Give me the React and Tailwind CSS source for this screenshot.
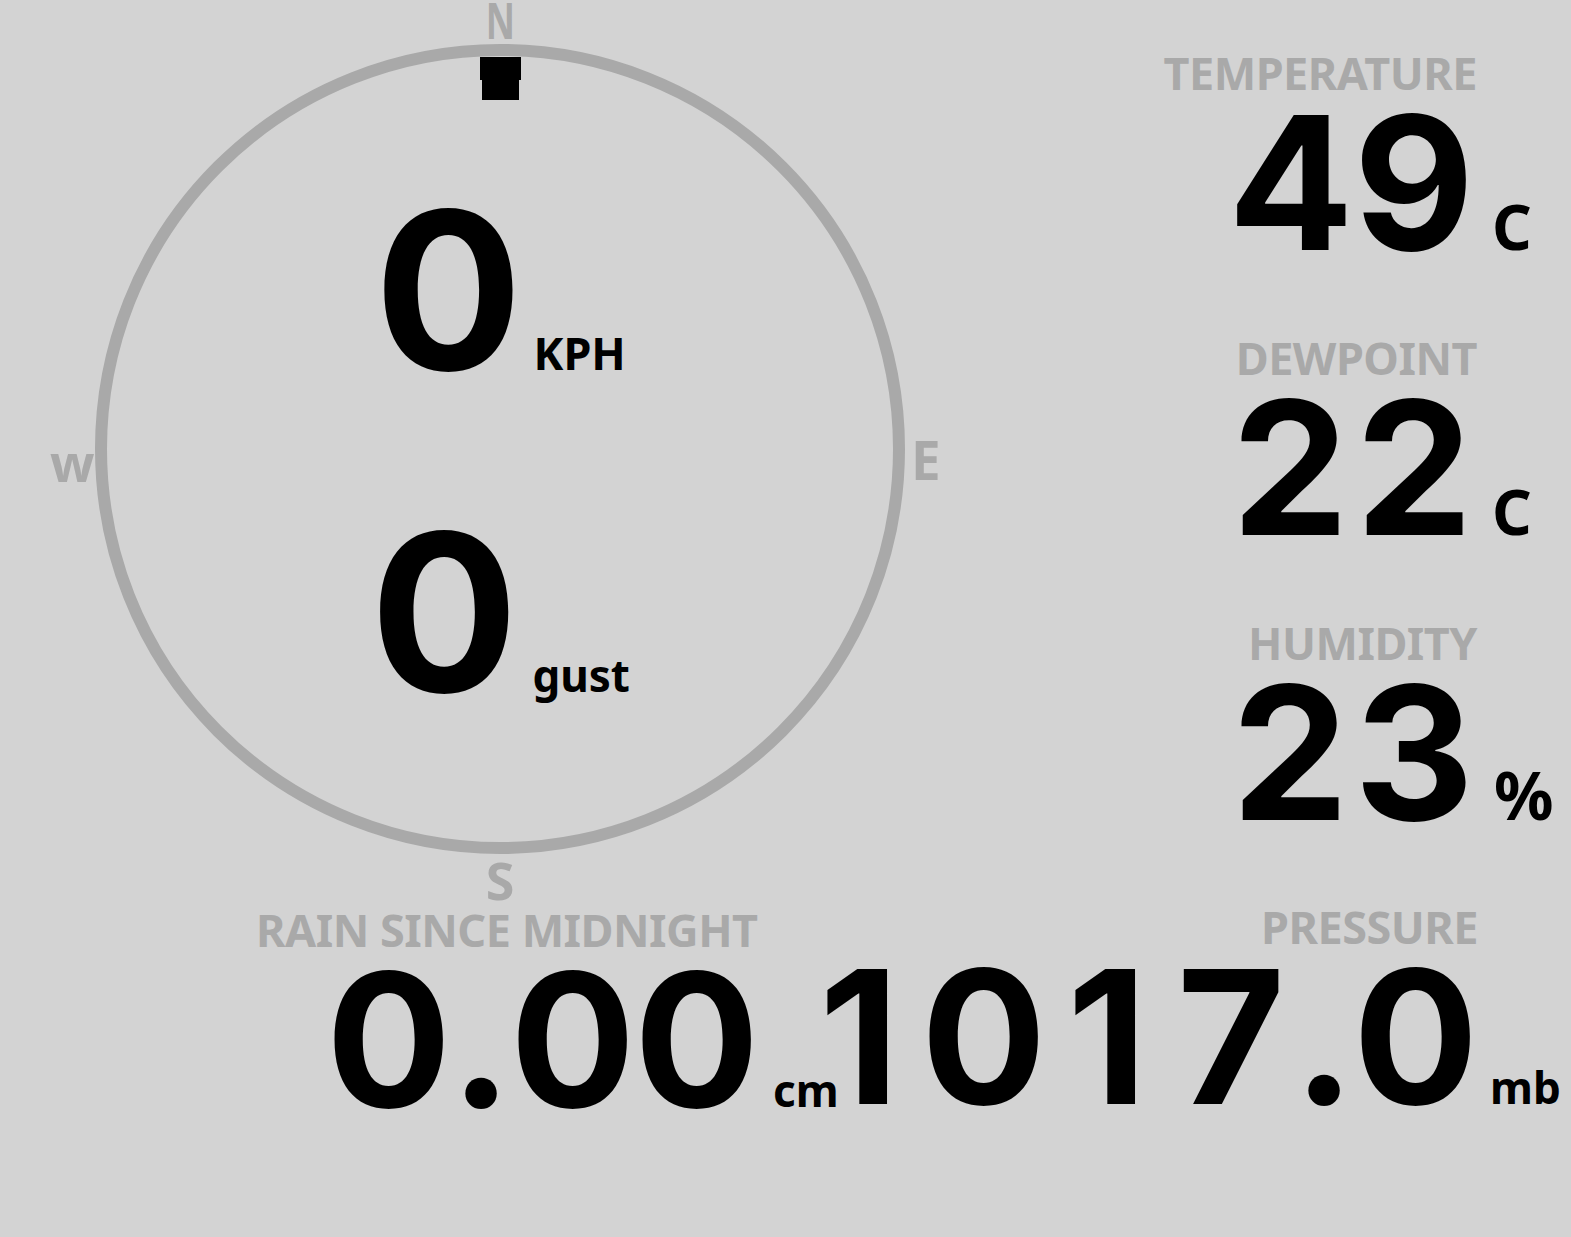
function BigNumber({ value }) {
  // fixed-width cells so every digit sits on the same pitch
  return (
    <span className="whitespace-nowrap font-['Inter',sans-serif] text-[186px] leading-[175px] font-bold text-black">
      {value.split("").map((ch, i) => (
        <span
          key={i}
          className={ch === "." ? "inline-block w-[60px] text-center" : "inline-block w-[124px] text-center"}
        >
          {ch}
        </span>
      ))}
    </span>
  )
}

function Stat({ label, value, unit, unitClass }) {
  return (
    <div className="flex flex-col items-end">
      <div className="mr-[94px] font-['Noto_Sans',sans-serif] text-[45px] leading-[45px] font-bold tracking-[-0.5px] text-[#a9a9a9]">
        {label}
      </div>
      <div className="flex items-baseline">
        <BigNumber value={value} />
        <span className={unitClass}>{unit}</span>
      </div>
    </div>
  )
}

function Compass() {
  return (
    <div className="flex w-[1000px] shrink-0 flex-col items-center">
      <div className="scale-x-[0.72] font-['Noto_Sans',sans-serif] text-[50px] leading-[40px] font-bold text-[#a9a9a9]">
        N
      </div>
      <div className="relative mt-[3px] h-[812px] w-[810px]">
        <svg className="absolute inset-0" width="810" height="812" viewBox="0 0 810 812">
          <circle cx="405" cy="406" r="399" fill="none" stroke="#a9a9a9" strokeWidth="12" />
          {/* wind direction pointer */}
          <path d="M385 14 H426 V37 H424 V57 H387 V37 H385 Z" fill="#000" />
        </svg>
        <span className="absolute left-[-45px] top-[399px] font-['Noto_Sans',sans-serif] text-[52px] leading-[40px] font-bold text-[#a9a9a9]">
          w
        </span>
        <span className="absolute left-[816px] top-[397px] font-['Noto_Sans',sans-serif] text-[53px] leading-[40px] font-bold text-[#a9a9a9]">
          E
        </span>
        <div className="relative flex flex-col items-center gap-[102px] pt-[137px]">
          <div className="flex items-baseline">
            <span className="font-['Inter',sans-serif] text-[220px] leading-[220px] font-bold text-black">
              0
            </span>
            <span className="ml-[11px] font-['Noto_Sans',sans-serif] text-[45px] leading-none font-bold text-black">
              KPH
            </span>
          </div>
          <div className="flex items-baseline">
            <span className="font-['Inter',sans-serif] text-[220px] leading-[220px] font-bold text-black">
              0
            </span>
            <span className="ml-[14px] font-['Noto_Sans',sans-serif] text-[44px] leading-none font-bold text-black">
              gust
            </span>
          </div>
        </div>
      </div>
      <div className="mt-[5px] font-['Noto_Sans',sans-serif] text-[52px] leading-[40px] font-bold text-[#a9a9a9]">
        S
      </div>
    </div>
  )
}

export default function App() {
  return (
    <div className="h-[1237px] w-full overflow-hidden bg-[#d3d3d3]">
      <div className="flex">
        <Compass />
        <div className="flex flex-1 flex-col items-end gap-[65px] pt-[50px]">
          <Stat
            label="TEMPERATURE"
            value="49"
            unit="C"
            unitClass="w-[95px] pl-[16px] font-['Noto_Sans',sans-serif] text-[62px] leading-none font-bold text-black"
          />
          <Stat
            label="DEWPOINT"
            value="22"
            unit="C"
            unitClass="w-[95px] pl-[16px] font-['Noto_Sans',sans-serif] text-[62px] leading-none font-bold text-black"
          />
          <Stat
            label="HUMIDITY"
            value="23"
            unit="%"
            unitClass="w-[95px] pl-[18px] font-['Noto_Sans',sans-serif] text-[66px] leading-none font-bold text-black"
          />
        </div>
      </div>

      {/* bottom row: rain + pressure */}
      <div className="mt-[4px] flex items-start">
        <div className="ml-[256px] mt-[3px] flex w-[541px] shrink-0 flex-col items-start">
          <div className="whitespace-nowrap font-['Noto_Sans',sans-serif] text-[45px] leading-[45px] font-bold tracking-[-0.5px] text-[#a9a9a9]">
            RAIN SINCE MIDNIGHT
          </div>
          <div className="ml-[70px] flex items-baseline whitespace-nowrap">
            <BigNumber value="0.00" />
            <span className="shrink-0 pl-[15px] font-['Noto_Sans',sans-serif] text-[44px] leading-none font-bold text-black">
              cm
            </span>
          </div>
        </div>
        <div className="ml-auto shrink-0">
          <Stat
            label="PRESSURE"
            value="1017.0"
            unit="mb"
            unitClass="w-[95px] pl-[13px] font-['Noto_Sans',sans-serif] text-[44px] leading-none font-bold text-black"
          />
        </div>
      </div>
    </div>
  )
}
